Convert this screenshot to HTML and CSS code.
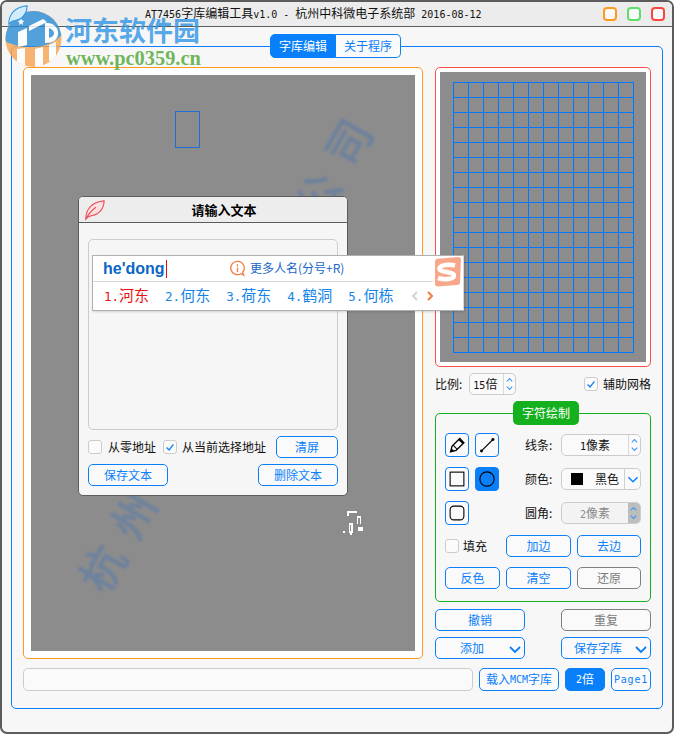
FILE: index.html
```html
<!DOCTYPE html>
<html lang="zh">
<head>
<meta charset="utf-8">
<title>AT7456字库编辑工具</title>
<link rel="stylesheet" href="styles.css">
</head>
<body>
<div class="window">
  <header class="titlebar">
    <div class="title"><span class="lat">AT7456</span>字库编辑工具<span class="lat">v1.0 - </span>杭州中科微电子系统部<span class="lat"> 2016-08-12</span></div>
    <div class="winbtns"><i class="wb wb-o"></i><i class="wb wb-g"></i><i class="wb wb-r"></i></div>
  </header>

  <div class="tabs"><div class="tab tab-on">字库编辑</div><div class="tab">关于程序</div></div>

  <section class="group">
    <div class="main">
      <div class="canvas-frame">
        <div class="canvas">
          <div class="wm">杭州中科微电子公司</div>
          <div class="sel"></div>
        </div>
      </div>
      <div class="side">
        <div class="preview-frame"><div class="preview"><div class="grid"></div></div></div>

        <div class="ratio">
          <span>比例:</span>
          <div class="combo combo-ratio"><span class="cv"><span class="lat">15</span>倍</span>
            <span class="spin"><svg viewBox="0 0 12 22"><path d="M3 8l3-3 3 3M3 14l3 3 3-3"/></svg></span></div>
          <label class="check check-r"><span class="box"><svg viewBox="0 0 14 14"><path d="M3 7.5l3 3 5-6.5"/></svg></span>辅助网格</label>
        </div>

        <div class="draw">
          <div class="draw-title">字符绘制</div>
          <div class="draw-row">
            <button class="tool"><svg viewBox="0 0 24 24"><path class="ol ol-b" d="M5 19.500l1.500-6L15 5l4.500 4.500L11 18z"/><path class="ol" d="M8 12.500l4 4"/><path class="fk" d="M5 19.500l1-4 3 3zM13.500 6.500l4.500 4.500 1.500-1.500L15 5z"/></svg></button>
            <button class="tool"><svg viewBox="0 0 24 24"><path class="ol" d="M6 18.500L18.500 6"/><circle class="fk" cx="6" cy="18.500" r="1.600"/><circle class="fk" cx="18.500" cy="6" r="1.600"/></svg></button>
            <span class="lab">线条:</span>
            <div class="combo"><span class="cv"><span class="lat">1</span>像素</span>
              <span class="spin"><svg viewBox="0 0 12 22"><path d="M3 8l3-3 3 3M3 14l3 3 3-3"/></svg></span></div>
          </div>
          <div class="draw-row">
            <button class="tool"><svg viewBox="0 0 24 24"><rect class="ol" x="4.500" y="4.500" width="15" height="15"/></svg></button>
            <button class="tool tool-on"><svg viewBox="0 0 24 24"><circle class="ol" cx="12" cy="12" r="7.800"/></svg></button>
            <span class="lab">颜色:</span>
            <div class="combo"><span class="swatch"></span><span class="cname">黑色</span>
              <span class="drop"><svg viewBox="0 0 16 22"><path d="M3 9l5 5 5-5"/></svg></span></div>
          </div>
          <div class="draw-row">
            <button class="tool"><svg viewBox="0 0 24 24"><rect class="ol" x="4.500" y="4.500" width="15" height="15" rx="4"/></svg></button>
            <span class="lab">圆角:</span>
            <div class="combo combo-off"><span class="cv"><span class="lat">2</span>像素</span>
              <span class="spin"><svg viewBox="0 0 12 22"><path d="M3 8l3-3 3 3M3 14l3 3 3-3"/></svg></span></div>
          </div>
          <div class="act-grid">
            <label class="check check-f"><span class="box"></span>填充</label>
            <button class="btn">加边</button>
            <button class="btn">去边</button>
            <button class="btn">反色</button>
            <button class="btn">清空</button>
            <button class="btn btn-off">还原</button>
          </div>
        </div>

        <div class="pair">
          <button class="btn">撤销</button>
          <button class="btn btn-off">重复</button>
        </div>
        <div class="pair pair-2">
          <button class="btn btn-menu">添加<svg viewBox="0 0 14 10"><path d="M2 2l5 5 5-5"/></svg></button>
          <button class="btn btn-menu">保存字库<svg viewBox="0 0 14 10"><path d="M2 2l5 5 5-5"/></svg></button>
        </div>
      </div>
    </div>

    <div class="bottom">
      <div class="path"></div>
      <button class="btn btn-load">载入<span class="lat">MCM</span>字库</button>
      <button class="btn btn-small btn-fill"><span class="lat">2</span>倍</button>
      <button class="btn btn-small"><span class="lat lat-page">Page1</span></button>
    </div>
  </section>

  <div class="dialog">
    <div class="dlg-head">
      <svg class="dlg-feather" viewBox="0 0 24 24"><path class="fe-fill" d="M3 22C3 12 9 3 23 2c0 9-6 15-13 16-3 .4-5 1-7 4z"/><path class="fe-line" d="M3 22C3 12 9 3 23 2c0 9-6 15-13 16-3 .4-5 1-7 4zM3 22c3-6 7-10 11-13"/></svg>
      请输入文本
    </div>
    <div class="dlg-body">
      <div class="textarea"></div>
      <div class="dlg-row">
        <label class="check"><span class="box"></span>从零地址</label>
        <label class="check check-2"><span class="box"><svg viewBox="0 0 14 14"><path d="M3 7.500l3 3 5-6.500"/></svg></span>从当前选择地址</label>
        <button class="btn btn-clear">清屏</button>
      </div>
      <div class="dlg-row dlg-row-2">
        <button class="btn btn-80">保存文本</button>
        <button class="btn btn-80">删除文本</button>
      </div>
    </div>
  </div>

  <div class="ime">
    <div class="ime-top">
      <span class="pinyin">he'dong<i class="caret"></i></span>
      <svg class="info" viewBox="0 0 18 18"><path d="M9 1.500a7 7 0 1 0 3.500 13l3 1.500-1-3A7 7 0 0 0 9 1.500z"/><path class="ii" d="M9 4.500v2M9 8v5"/></svg>
      <span class="more">更多人名(分号+R)</span>
    </div>
    <div class="ime-cands">
      <span class="cand cand-on"><span class="num">1.</span>河东</span>
      <span class="cand"><span class="num">2.</span>何东</span>
      <span class="cand"><span class="num">3.</span>荷东</span>
      <span class="cand"><span class="num">4.</span>鹤洞</span>
      <span class="cand"><span class="num">5.</span>何栋</span>
      <svg class="arr arr-l" viewBox="0 0 8 12"><path d="M6 2L2 6l4 4"/></svg>
      <svg class="arr arr-r" viewBox="0 0 8 12"><path d="M2 2l4 4-4 4"/></svg>
    </div>
    <svg class="ime-logo" viewBox="0 0 30 30"><path class="sq" d="M3 5q0-3 3-3.300l20-1.700q3 0 3 3L28 25q0 3-3 3L6 29.500q-3 0-3-3z"/><path class="ss" d="M23 8.500C18 7 8 7.500 7.500 11.500S22 14.500 22 18.500 12 23 6 21"/></svg>
  </div>

  <svg class="cursor" viewBox="0 0 22 26"><path d="M5 1h10v2H7v3H5zM15 6h4v8h-1V8h-2v6h-1zM7 13h4v10H10v2H8v-2H7zM8 15v6h1v-6zM16 17h5v4h-5zM1 21h2v2H1z"/></svg>

  <div class="brand">
    <svg class="brand-mark" viewBox="0 0 57 56">
      <defs><clipPath id="disc"><circle cx="28.500" cy="28" r="28"/></clipPath></defs>
      <g clip-path="url(#disc)">
        <rect class="bm-o" width="57" height="56"/>
        <path class="bm-b" d="M0 0h57v24c-8 8-18 12-30 12-10 0-20-2-27-6z"/>
        <path class="bm-w" d="M13 21l9-4v17l-9 2zM24 15l14-7 4 3-18 9zM40 12h3c8 1 11 7 10 12-1 5-5 8-13 8zM44 17v10c4-1 5-3 5-5s-2-4-5-5z"/>
        <path class="bm-w" d="M12 38l8-1v19h-8zM30 38l8-2v20h-8zM44 34l7-3v19h-7z"/>
        <path class="bm-w" d="M16 7l1 2.500 2.500 .5-2 1.500.5 2.500-2-1.500-2 1.500.5-2.500-2-1.500 2.500-.5z"/>
      </g>
    </svg>
    <svg class="brand-feather" viewBox="0 0 24 24"><path class="bf-fill" d="M3 22C3 12 9 3 23 2c0 9-6 15-13 16-3 .4-5 1-7 4z"/><path class="bf-line" d="M3 22C3 12 9 3 23 2c0 9-6 15-13 16-3 .4-5 1-7 4z"/></svg>
    <div class="brand-cn">河东软件园</div>
    <div class="brand-url">www.pc0359.cn</div>
  </div>
</div>
</body>
</html>
```
FILE: styles.css
```css
* { box-sizing: border-box; }
html, body { margin: 0; padding: 0; }
body { width: 674px; height: 734px; overflow: hidden; background: #fff;
  font: 12px/1.2 "Noto Sans CJK SC", "Noto Sans", sans-serif; color: #111; }
svg { display: block; }
button { font: inherit; margin: 0; padding: 0; }
.lat { font-family: "DejaVu Sans Mono", "Liberation Mono", monospace; font-size: 10px; white-space: pre; }
.lat-page { letter-spacing: .8px; }

.window { position: relative; width: 674px; height: 734px; background: #f7f7f7; border: 2px solid #5c5c5c; border-radius: 7px; overflow: hidden; }

.titlebar { display: flex; align-items: center; height: 25px; background: #ececec; border-bottom: 1px solid #5c5c5c; padding: 0 7px 0 143px; }
.title { white-space: nowrap; line-height: 24px; color: #111; }
.winbtns { display: flex; gap: 10px; margin-left: auto; }
.wb { display: block; width: 14px; height: 14px; border-radius: 4px; border: 2.5px solid; background: #fafafa; }
.wb-o { border-color: #ff9a1f; }
.wb-g { border-color: #5ddf6c; }
.wb-r { border-color: #fb4640; }

.tabs { position: relative; z-index: 1; display: flex; width: 131px; height: 24px; margin: 7px 0 -12px 268px; }
.tab { flex: 1; display: flex; align-items: center; justify-content: center; border: 1px solid #0a7ffa; border-left: 0; border-radius: 0 5px 5px 0; background: #fafafa; color: #0a7ffa; }
.tab-on { flex: 0 0 66px; border: 1px solid #0a7ffa; border-radius: 5px 0 0 5px; background: #0a7ffa; color: #fff; }

.group { width: 652px; height: 663px; margin-left: 9px; padding: 20px 11px 0; border: 1px solid #0a7ffa; border-radius: 5px; }
.main { display: flex; gap: 12px; height: 592px; }

.canvas-frame { width: 400px; height: 592px; padding: 7px; background: #fff; border: 1px solid #ff9a1f; border-radius: 5px; }
.canvas { position: relative; width: 384px; height: 576px; overflow: hidden; background: #8c8c8c; }
.wm { position: absolute; left: -66px; top: 265px; width: 500px; text-align: center; white-space: nowrap; font-size: 44px; line-height: 60px; letter-spacing: 17.500px; color: rgba(65, 115, 185, .34); -webkit-text-stroke: 1px rgba(65, 115, 185, .34); transform: rotate(-60deg); filter: blur(.8px); }
.sel { position: absolute; left: 144px; top: 36px; width: 25px; height: 37px; border: 1px solid #1a6fd8; }

.side { width: 216px; }
.preview-frame { height: 300px; padding: 4px; background: #fff; border: 1px solid #f9504a; border-radius: 5px; }
.preview { height: 290px; padding: 10px 0 0 13px; background: #8c8c8c; }
.grid { width: 181px; height: 271px; border-right: 1px solid #0078ff; border-bottom: 1px solid #0078ff;
  background-image: linear-gradient(#0078ff 1px, transparent 1px), linear-gradient(90deg, #0078ff 1px, transparent 1px);
  background-size: 15px 15px; }

.ratio { display: flex; align-items: center; height: 22px; margin-top: 6px; }
.combo { display: flex; align-items: center; width: 80px; height: 22px; background: #fafafa; border: 1px solid #ccc; border-radius: 5px; }
.combo-ratio { width: 47px; margin-left: 7px; }
.cv { flex: 1; text-align: center; }
.combo-ratio .cv { text-align: left; padding-left: 3px; }
.spin { flex: 0 0 12px; height: 100%; border-left: 1px solid #d8d8d8; }
.spin svg { width: 11px; height: 20px; }
.spin path { fill: none; stroke: #3f98f5; stroke-width: 1.200; }
.combo-off { color: #8a8a8a; background: #f3f3f3; }
.combo-off .spin { background: #bdbdbd; border-radius: 0 4px 4px 0; border-left: 0; }
.swatch { flex: none; width: 12px; height: 12px; margin-left: 9px; background: #000; }
.cname { flex: none; margin-left: 12px; }
.drop { flex: none; width: 17px; height: 100%; margin-left: 5px; border-left: 1px solid #d0d0d0; }
.drop svg { width: 16px; height: 20px; }
.drop path { fill: none; stroke: #0a7ffa; stroke-width: 1.600; }

.check { display: inline-flex; align-items: center; gap: 6px; white-space: nowrap; }
.box { flex: none; width: 14px; height: 14px; background: #fbfbfb; border: 1px solid #ccc; border-radius: 3px; }
.box svg { width: 12px; height: 12px; }
.box path { fill: none; stroke: #1584f2; stroke-width: 1.600; }
.check-r { margin-left: auto; gap: 5px; }

.draw { height: 189px; margin-top: 18px; padding: 0 9px; border: 1px solid #14b01e; border-radius: 5px; }
.draw-title { width: 66px; height: 24px; margin: -13px 0 8px 68px; display: flex; align-items: center; justify-content: center; background: #14b01e; color: #fff; border-radius: 5px; }
.draw-row { display: flex; align-items: center; gap: 6px; height: 24px; margin-bottom: 10px; }
.tool { width: 24px; height: 24px; background: #fafafa; border: 1px solid #0a7ffa; border-radius: 4px; }
.tool svg { width: 22px; height: 22px; }
.ol { fill: none; stroke: #000; stroke-width: 1.200; }
.ol-b { stroke-width: 1.500; }
.fk { fill: #000; }
.tool-on { background: #0a7ffa; }
.lab { width: 28px; margin-left: auto; margin-right: 2px; white-space: nowrap; }
.act-grid { display: grid; grid-template-columns: 55px 65px 64px; grid-auto-rows: 22px; gap: 10px 6px; }
.check-f { gap: 4px; }

.btn { display: flex; align-items: center; justify-content: center; position: relative; height: 22px; background: #fafafa; color: #0a7ffa; border: 1px solid #0a7ffa; border-radius: 5px; white-space: nowrap; }
.btn-off { color: #7a7a7a; border-color: #7f7f7f; }
.pair { display: flex; justify-content: space-between; margin-top: 7px; }
.pair-2 { margin-top: 6px; }
.pair .btn { width: 90px; }
.btn-menu { padding-right: 16px; }
.btn-menu svg { position: absolute; right: 2px; top: 7px; width: 14px; height: 10px; }
.btn-menu path { fill: none; stroke: #0a7ffa; stroke-width: 1.800; }

.bottom { display: flex; gap: 6px; margin-top: 9px; height: 23px; }
.path { width: 450px; background: #fafafa; border: 1px solid #ccc; border-radius: 5px; }
.bottom .btn { height: 23px; }
.btn-load { width: 80px; }
.btn-small { width: 40px; }
.btn-fill { background: #0a7ffa; color: #fff; }

.dialog { position: absolute; left: 76px; top: 194px; width: 270px; height: 300px; background: #f6f6f6; border: 1px solid #5c5c5c; border-radius: 5px; }
.dlg-head { position: relative; display: flex; align-items: center; justify-content: center; height: 26px; padding-left: 22px; background: #ededed; border-bottom: 1px solid #5c5c5c; border-radius: 4px 4px 0 0; font-size: 13px; font-weight: 700; color: #000; }
.dlg-feather { position: absolute; left: 4px; top: 2px; width: 22px; height: 22px; }
.fe-fill { fill: #fde0e0; }
.fe-line { fill: none; stroke: #ee4a58; stroke-width: 1.200; }
.dlg-body { padding: 16px 9px 0; }
.textarea { height: 191px; background: #f6f6f6; border: 1px solid #ccc; border-radius: 5px; }
.dlg-row { display: flex; align-items: center; justify-content: space-between; margin-top: 6px; height: 22px; }
.dlg-row > .check { flex: none; }
.check-2 { gap: 5px; margin-left: 7px; margin-right: auto; }
.btn-clear { width: 62px; }
.btn-80 { width: 80px; }

.ime { position: absolute; left: 90px; top: 253px; width: 372px; height: 56px; background: #fff; border: 1px solid #b0b0b0; border-right-color: #d8d8d8; box-shadow: 1px 1px 2px rgba(0,0,0,.15); }
.ime-top { display: flex; align-items: center; width: 340px; height: 26px; border-bottom: 1px solid #d8d8d8; padding-left: 10px; }
.pinyin { display: flex; align-items: center; width: 126px; font: 700 16px/20px "Liberation Sans", sans-serif; color: #0c66c6; }
.caret { display: block; width: 1px; height: 18px; margin-left: 1px; background: #e01010; }
.info { width: 17px; height: 17px; flex: none; }
.info path { fill: none; stroke: #f47c45; stroke-width: 1.400; }
.more { margin-left: 4px; color: #1666c8; white-space: nowrap; }
.ime-cands { display: flex; align-items: center; height: 28px; padding-left: 11px; gap: 16px; }
.cand { font-size: 15px; line-height: 20px; color: #1584e8; white-space: nowrap; }
.num { font-family: "DejaVu Sans Mono", monospace; font-size: 12.500px; }
.cand-on { color: #e81010; }
.arr { width: 8px; height: 12px; flex: none; }
.arr path { fill: none; stroke-width: 2; }
.arr-l { margin-left: 2px; }
.arr-l path { stroke: #d4d4d4; }
.arr-r { margin-left: -9px; }
.arr-r path { stroke: #f47c45; }
.ime-logo { position: absolute; left: 339px; top: 1px; width: 30px; height: 30px; }
.sq { fill: #f9a78b; }
.ss { fill: none; stroke: #fff; stroke-width: 4.500; }

.cursor { position: absolute; left: 340px; top: 508px; width: 22px; height: 26px; }
.cursor path { fill: #fff; fill-rule: evenodd; }

.brand { position: absolute; left: 0; top: 0; width: 210px; height: 70px; }
.brand-mark { position: absolute; left: 3px; top: 9px; width: 57px; height: 56px; opacity: .82; }
.bm-o { fill: #f6a653; }
.bm-b { fill: #2f8fd6; }
.bm-w { fill: #fff; }
.brand-feather { position: absolute; left: 4px; top: 2px; width: 22px; height: 22px; }
.bf-fill { fill: #d3ecfb; }
.bf-line { fill: none; stroke: #2e98e6; stroke-width: 1.200; }
.brand-cn { position: absolute; left: 63px; top: 12px; font-weight: 700; font-size: 27px; line-height: 32px; white-space: nowrap; color: rgba(50, 150, 230, .82); }
.brand-url { position: absolute; left: 64px; top: 45px; font: 700 20.400px/22px "Liberation Serif", serif; white-space: nowrap; color: rgba(85, 170, 60, .85); }
```
